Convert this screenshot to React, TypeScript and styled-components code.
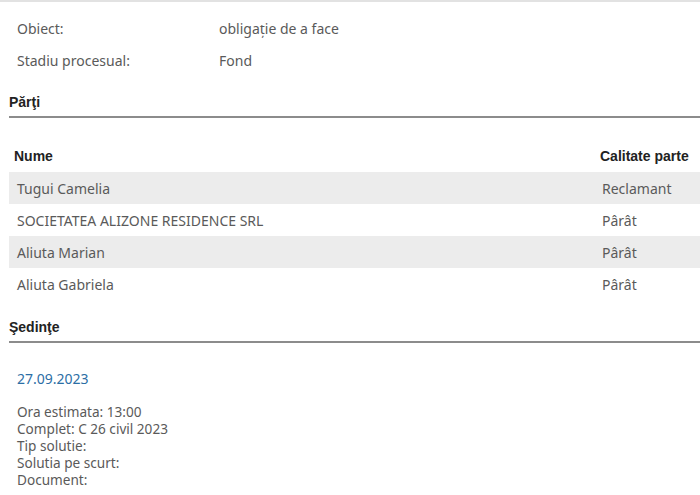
import React from 'react';
import styled, { createGlobalStyle } from 'styled-components';

const GlobalStyle = createGlobalStyle`
  html, body {
    margin: 0;
    padding: 0;
    background: #fff;
  }
  body {
    font-family: 'Noto Sans', 'Open Sans', sans-serif;
    color: #555;
  }
`;

const Page = styled.div`
  width: 700px;
  height: 495px;
  overflow: hidden;
  border-top: 2px solid #e2e2e2;
  box-sizing: border-box;
  padding-top: 10px;
`;

const InfoRow = styled.div`
  display: grid;
  grid-template-columns: 202px 1fr;
  height: 32px;
  align-items: center;
  padding-left: 17px;
  font-size: 14px;
  color: #5a5a5a;
`;

const SectionTitle = styled.h3<{ $top: number }>`
  margin: ${(p) => p.$top}px 0 0 9px;
  height: 27px;
  line-height: 26px;
  font-family: 'Liberation Sans', Arial, sans-serif;
  font-weight: bold;
  font-size: 14px;
  color: #222;
  border-bottom: 2px solid #8c8c8c;
`;

const Table = styled.div`
  margin: 22px 0 0 9px;
`;

const HeadRow = styled.div`
  display: grid;
  grid-template-columns: 1fr 100px;
  height: 32px;
  align-items: center;
  font-family: 'Liberation Sans', Arial, sans-serif;
  font-weight: bold;
  font-size: 14px;
  color: #222;
  padding-left: 5px;
`;

const BodyRow = styled.div<{ $shaded: boolean }>`
  display: grid;
  grid-template-columns: 1fr 98px;
  height: 32px;
  align-items: center;
  padding-left: 8px;
  font-size: 14px;
  color: #5a5a5a;
  background: ${(p) => (p.$shaded ? '#ececec' : 'transparent')};
`;

const Hearing = styled.div`
  padding: 27px 0 0 17px;
  font-size: 13.6px;
  color: #5a5a5a;
`;

const HearingDate = styled.div`
  color: #2c6ea5;
  font-size: 14px;
  height: 18px;
  line-height: 18px;
  margin-bottom: 15px;
`;

const Detail = styled.div`
  line-height: 17px;
  height: 17px;
`;

const parties = [
  { name: 'Tugui Camelia', role: 'Reclamant' },
  { name: 'SOCIETATEA ALIZONE RESIDENCE SRL', role: 'Pârât' },
  { name: 'Aliuta Marian', role: 'Pârât' },
  { name: 'Aliuta Gabriela', role: 'Pârât' },
];

const details = [
  'Ora estimata: 13:00',
  'Complet: C 26 civil 2023',
  'Tip solutie:',
  'Solutia pe scurt:',
  'Document:',
];

export default function App() {
  return (
    <>
      <GlobalStyle />
      <Page>
        <InfoRow>
          <span>Obiect:</span>
          <span>obligație de a face</span>
        </InfoRow>
        <InfoRow>
          <span>Stadiu procesual:</span>
          <span>Fond</span>
        </InfoRow>

        <SectionTitle $top={13}>Părţi</SectionTitle>
        <Table>
          <HeadRow>
            <span>Nume</span>
            <span>Calitate parte</span>
          </HeadRow>
          {parties.map((p, i) => (
            <BodyRow key={p.name} $shaded={i % 2 === 0}>
              <span>{p.name}</span>
              <span>{p.role}</span>
            </BodyRow>
          ))}
        </Table>

        <SectionTitle $top={14}>Şedinţe</SectionTitle>
        <Hearing>
          <HearingDate>27.09.2023</HearingDate>
          {details.map((d) => (
            <Detail key={d}>{d}</Detail>
          ))}
        </Hearing>
      </Page>
    </>
  );
}
